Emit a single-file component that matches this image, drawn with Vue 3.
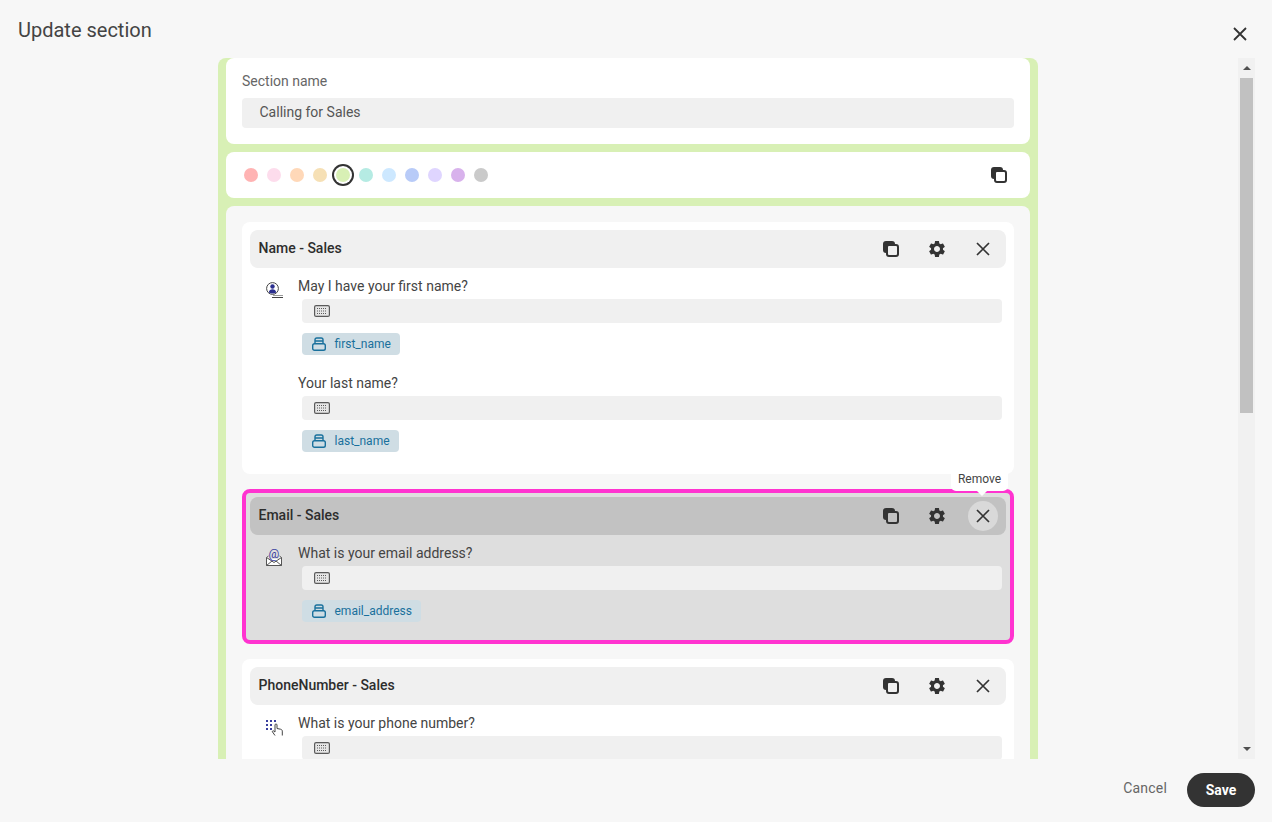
<script setup>
const colors = ['#ffb3b3','#fddcec','#ffd8b8','#f6e0b5','#d8f0b5','#b5ebe3','#cde8ff','#b8cbf8','#dfd5ff','#d8b2ec','#cacaca']
const fields = [
  { title: 'Name - Sales', icon: 'person', questions: [
    { text: 'May I have your first name?', chip: 'first_name' },
    { text: 'Your last name?', chip: 'last_name' } ] },
  { title: 'Email - Sales', icon: 'mail', selected: true, questions: [
    { text: 'What is your email address?', chip: 'email_address' } ] },
  { title: 'PhoneNumber - Sales', icon: 'phone', questions: [
    { text: 'What is your phone number?' } ] },
]
const gear = 'M19.14 12.94c.04-.3.06-.61.06-.94 0-.32-.02-.64-.07-.94l2.03-1.58c.18-.14.23-.41.12-.61l-1.92-3.32c-.12-.22-.37-.29-.59-.22l-2.39.96c-.5-.38-1.03-.7-1.62-.94l-.36-2.54c-.04-.24-.24-.41-.48-.41h-3.84c-.24 0-.43.17-.47.41l-.36 2.54c-.59.24-1.13.57-1.62.94l-2.39-.96c-.22-.08-.47 0-.59.22L2.74 8.87c-.12.21-.08.47.12.61l2.03 1.58c-.05.3-.09.63-.09.94s.02.64.07.94l-2.03 1.58c-.18.14-.23.41-.12.61l1.92 3.32c.12.22.37.29.59.22l2.39-.96c.5.38 1.03.7 1.62.94l.36 2.54c.05.24.24.41.48.41h3.84c.24 0 .44-.17.47-.41l.36-2.54c.59-.24 1.13-.56 1.62-.94l2.39.96c.22.08.47 0 .59-.22l1.92-3.32c.12-.22.07-.47-.12-.61l-2.01-1.58zM12 15.6c-1.98 0-3.6-1.62-3.6-3.6s1.62-3.6 3.6-3.6 3.6 1.62 3.6 3.6-1.62 3.6-3.6 3.6z'
const closeP = 'M1 1L13 13M13 1L1 13'
</script>

<template>
  <div class="page">
    <header class="top">
      <h1 class="title">Update section</h1>
      <button class="top-close" aria-label="Close">
        <svg width="14" height="14" viewBox="0 0 14 14"><path :d="closeP" fill="none" stroke="#333" stroke-width="1.8"/></svg>
      </button>
    </header>

    <div class="middle">
      <div class="scroller">
        <div class="sheet">
          <section class="card name-card">
            <div class="label">Section name</div>
            <div class="input">Calling for Sales</div>
          </section>

          <section class="card color-card">
            <div class="dots">
              <span v-for="(c, i) in colors" :key="c" class="dot" :class="{ picked: i === 4 }" :style="{ background: c }"></span>
            </div>
            <button class="act" aria-label="Duplicate">
              <svg width="16" height="16" viewBox="0 0 16 16"><rect x="0" y="0" width="12" height="12" rx="3" fill="#333"/><rect x="4" y="4" width="11" height="11" rx="2" fill="#fff" stroke="#333" stroke-width="2"/></svg>
            </button>
          </section>

          <section class="fields">
            <article v-for="f in fields" :key="f.title" class="field" :class="{ selected: f.selected }">
              <div class="field-head">
                <span class="field-title">{{ f.title }}</span>
                <div class="acts">
                  <button class="act">
                    <svg width="16" height="16" viewBox="0 0 16 16"><rect x="0" y="0" width="12" height="12" rx="3" fill="#333"/><rect x="4" y="4" width="11" height="11" rx="2" :fill="f.selected ? '#c2c2c2' : '#f0f0f0'" stroke="#333" stroke-width="2"/></svg>
                  </button>
                  <button class="act">
                    <svg width="20" height="20" viewBox="0 0 24 24"><path :d="gear" fill="#333"/></svg>
                  </button>
                  <button class="act" :class="{ hover: f.selected }">
                    <svg width="14" height="14" viewBox="0 0 14 14"><path :d="closeP" fill="none" stroke="#333" stroke-width="1.7"/></svg>
                    <span v-if="f.selected" class="tip">Remove</span>
                  </button>
                </div>
              </div>
              <div class="field-body">
                <div class="type-icon">
                  <svg v-if="f.icon === 'person'" width="18" height="18" viewBox="0 0 18 18">
                    <circle cx="6.500" cy="7.500" r="5.900" fill="none" stroke="#444" stroke-width="1"/>
                    <circle cx="6.500" cy="5.500" r="2.200" fill="#2b2f8f"/>
                    <path d="M2.800 11.500c.4-2.500 1.700-3.200 3.700-3.200s3.300.7 3.700 3.200c-2 1.300-5.400 1.300-7.400 0z" fill="#2b2f8f"/>
                    <path d="M7 14.500h10" stroke="#999" stroke-width="1"/>
                    <path d="M6 16.500h11" stroke="#444" stroke-width="1"/>
                  </svg>
                  <svg v-else-if="f.icon === 'mail'" width="18" height="18" viewBox="0 0 18 18">
                    <path d="M.5 17.500V9.500L8 4l7.500 5.500v8z" fill="#fff" stroke="#555" stroke-width="1"/>
                    <rect x="2.500" y="0" width="11" height="11" fill="#dedede"/>
                    <path d="M.5 9.500l7.500 5 7.500-5M.5 17.500L6 13M15.500 17.500L10 13" fill="none" stroke="#555" stroke-width="1"/>
                    <text x="8" y="9.500" class="at">@</text>
                  </svg>
                  <svg v-else width="18" height="18" viewBox="0 0 18 18">
                    <g fill="#3a3f9e">
                      <rect x="0" y="2" width="2" height="2"/><rect x="4" y="2" width="2" height="2"/><rect x="8" y="2" width="2" height="2"/>
                      <rect x="0" y="6" width="2" height="2"/><rect x="4" y="6" width="2" height="2"/>
                      <rect x="0" y="10" width="2" height="2"/><rect x="4" y="10" width="2" height="2"/>
                    </g>
                    <path d="M9 17.500L6.200 13.500l1-.8L9 14V7a1 1 0 0 1 2 0v3.500l3.500 .7c1 .2 1.800.9 1.800 1.900v4.400" fill="none" stroke="#444" stroke-width="1"/>
                  </svg>
                </div>
                <div class="questions">
                  <div v-for="q in f.questions" :key="q.text" class="question">
                    <div class="q-text">{{ q.text }}</div>
                    <div class="answer">
                      <svg width="16" height="12" viewBox="0 0 16 12">
                        <rect x=".6" y=".6" width="14.800" height="10.800" rx="1.500" fill="#e6e6e6" stroke="#5a5a5a" stroke-width="1.200"/>
                        <path d="M3 3.500h10M3 6h10M3 8.500h10" stroke="#5a5a5a" stroke-width="1" stroke-dasharray="1 1"/>
                      </svg>
                    </div>
                    <div v-if="q.chip" class="chip">
                      <svg width="14" height="14" viewBox="0 0 14 14">
                        <rect x=".7" y="6.700" width="12.600" height="6.600" rx="1.800" fill="none" stroke="#19709c" stroke-width="1.400"/>
                        <path d="M3 6.500V2.800Q3 1 4.800 1h4.400Q11 1 11 2.800v3.700M3 4h8" fill="none" stroke="#19709c" stroke-width="1.400"/>
                      </svg>
                      <span>{{ q.chip }}</span>
                    </div>
                  </div>
                </div>
              </div>
            </article>
          </section>
        </div>
      </div>

      <div class="scrollbar">
        <div class="arrow up"></div>
        <div class="track"><div class="thumb"></div></div>
        <div class="arrow down"></div>
      </div>
    </div>

    <footer class="foot">
      <button class="cancel">Cancel</button>
      <button class="save">Save</button>
    </footer>
  </div>
</template>

<style>
html, body { margin: 0; background: #f7f7f7; }
</style>

<style scoped>
.page {
  width: 1272px; height: 822px; overflow: hidden;
  display: flex; flex-direction: column;
  background: #f7f7f7;
  font-family: Roboto, "Liberation Sans", sans-serif;
  color: #444;
}
button { border: 0; background: none; padding: 0; font: inherit; cursor: pointer; }

.top { height: 58px; flex: none; display: flex; justify-content: space-between; padding: 0 25px 0 18px; box-sizing: border-box; }
.title { margin: 18px 0 0; font-size: 20px; line-height: 24px; font-weight: 400; color: #444; }
.top-close { width: 14px; height: 14px; margin-top: 27px; display: flex; }

.middle { height: 701px; flex: none; display: flex; padding: 0 17px 0 18px; }
.scroller { flex: 1; overflow: hidden; display: flex; justify-content: center; }
.sheet {
  width: 820px; box-sizing: border-box; flex: none; align-self: flex-start;
  background: #d8f0b5; border-radius: 8px; padding: 0 8px 8px;
  display: flex; flex-direction: column; gap: 8px;
}
.card { background: #fff; border-radius: 8px; }
.name-card { padding: 13px 16px 16px; }
.label { font-size: 14px; line-height: 20px; color: #666; margin-bottom: 7px; }
.input { height: 30px; line-height: 29px; background: #f0f0f0; border-radius: 4px; padding-left: 17.5px; font-size: 14px; color: #555; }

.color-card { height: 46px; display: flex; align-items: center; justify-content: space-between; padding: 0 16px 0 18px; }
.dots { display: flex; gap: 9px; }
.dot { width: 14px; height: 14px; border-radius: 50%; }
.dot.picked { box-shadow: 0 0 0 2px #fff, 0 0 0 4px #333; }

.act { width: 30px; height: 30px; border-radius: 50%; display: flex; align-items: center; justify-content: center; position: relative; }
.act.hover { background: #d9d9d9; }

.fields { background: #f7f7f7; border-radius: 8px; padding: 16px; display: flex; flex-direction: column; gap: 15px; }
.field { background: #fff; border-radius: 8px; padding: 8px 8px 22px; }
.field.selected { background: #dedede; border: 4px solid #ff33d0; padding: 4px 4px 18px; }
.field-head { height: 38px; display: flex; align-items: center; justify-content: space-between; background: #f0f0f0; border-radius: 8px; padding: 0 8px; }
.selected .field-head { background: #c2c2c2; }
.field-title { font-size: 14px; font-weight: 500; color: #2d2d2d; padding: 0 0 2px .5px; }
.acts { display: flex; gap: 16px; }

.tip {
  position: absolute; left: -17px; top: -34px; width: 57px; height: 24px;
  background: #fff; border-radius: 5px; font-size: 12px; line-height: 24px;
  text-align: center; color: #444;
}
.tip::after {
  content: ""; position: absolute; left: 26px; top: 24px;
  border: 5px solid transparent; border-top-color: #fff; border-bottom: 0;
}

.field-body { display: grid; grid-template-columns: 48px 1fr; padding: 8px 4px 0 0; }
.type-icon { padding: 5px 0 0 16px; height: 18px; }
.type-icon svg { display: block; }
.at { font-size: 12px; fill: #3a3f9e; text-anchor: middle; font-family: Roboto, sans-serif; }
.questions { display: flex; flex-direction: column; gap: 18px; }
.q-text { font-size: 14px; line-height: 20px; color: #444; margin-bottom: 3px; }
.answer { margin-left: 4px; height: 24px; background: #f0f0f0; border-radius: 4px; display: flex; align-items: center; padding-left: 12px; }
.chip {
  margin: 10px 0 0 4px; height: 22px; width: fit-content; box-sizing: border-box;
  display: flex; align-items: center; gap: 8.5px; padding: 0 9.5px 0 10px;
  background: #cfdde4; border-radius: 4px;
  font-size: 12px; color: #19709c;
}

.scrollbar { width: 17px; flex: none; background: #f1f1f1; display: flex; flex-direction: column; }
.arrow { height: 20px; flex: none; display: flex; justify-content: center; align-items: center; }
.arrow.up::before { content: ""; border: 4px solid transparent; border-top: 0; border-bottom: 4px solid #505050; }
.arrow.down::before { content: ""; border: 4px solid transparent; border-bottom: 0; border-top: 4px solid #505050; }
.track { flex: 1; padding: 0 2px; }
.thumb { height: 335px; background: #c1c1c1; }

.foot { height: 63px; flex: none; box-sizing: border-box; display: flex; justify-content: flex-end; align-items: flex-start; gap: 20px; padding: 14px 17px 0 0; }
.cancel { height: 30px; line-height: 30px; font-size: 14px; color: #666; letter-spacing: .2px; }
.save { width: 68px; height: 34px; border-radius: 18px; background: #333; color: #fff; font-size: 14px; font-weight: 700; }
</style>
